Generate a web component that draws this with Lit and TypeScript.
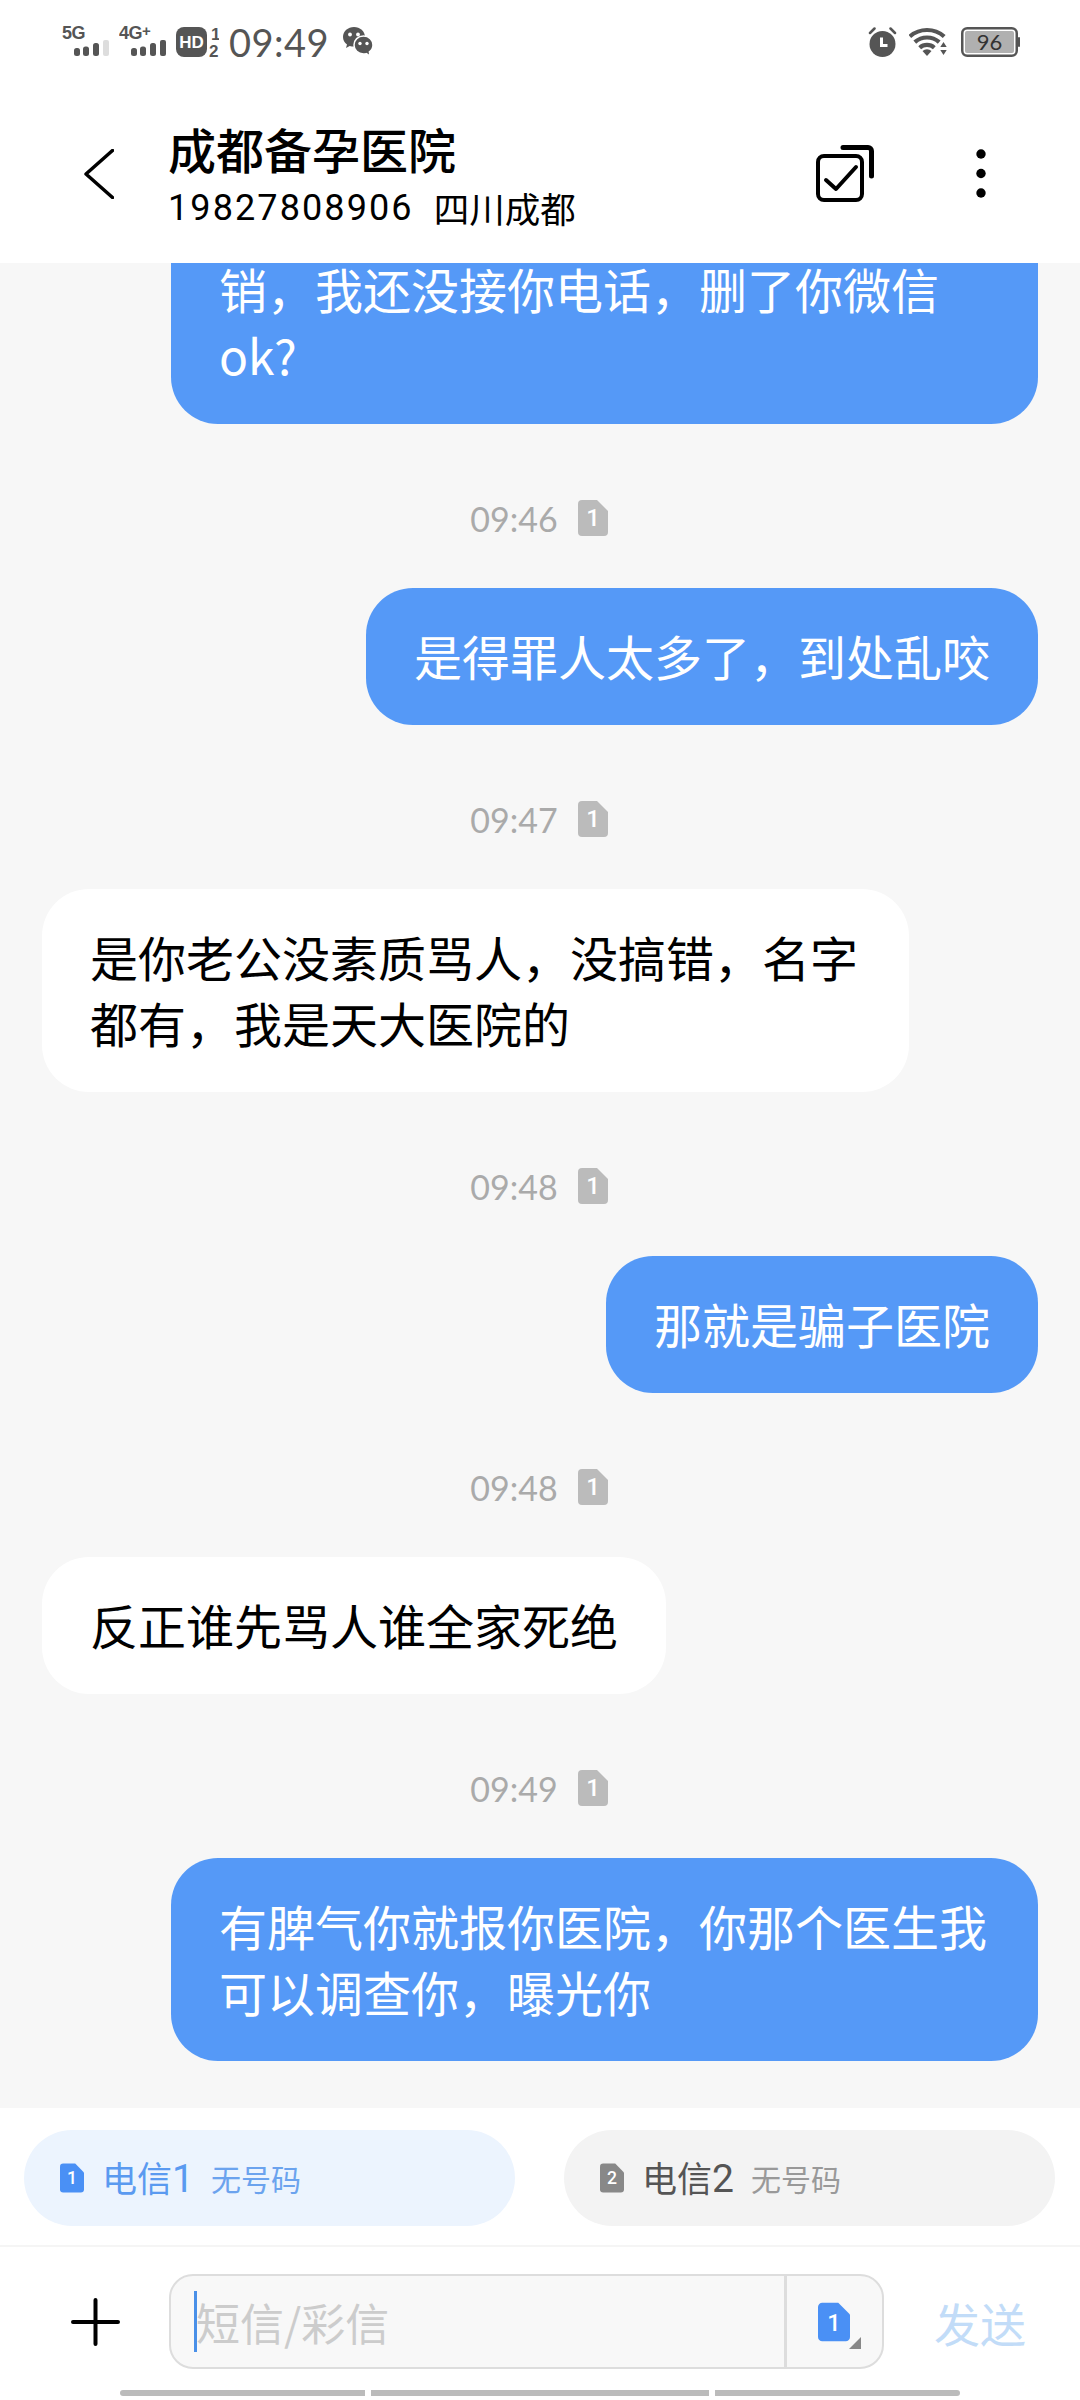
import { LitElement, html, css, svg } from 'lit';
import { customElement } from 'lit/decorators.js';

type Msg = { time?: string; text: string[]; mine: boolean; clipped?: boolean };

const MESSAGES: Msg[] = [
  { text: ['销，我还没接你电话，删了你微信', 'ok?'], mine: true, clipped: true },
  { time: '09:46', text: ['是得罪人太多了，到处乱咬'], mine: true },
  { time: '09:47', text: ['是你老公没素质骂人，没搞错，名字', '都有，我是天大医院的'], mine: false },
  { time: '09:48', text: ['那就是骗子医院'], mine: true },
  { time: '09:48', text: ['反正谁先骂人谁全家死绝'], mine: false },
  { time: '09:49', text: ['有脾气你就报你医院，你那个医生我', '可以调查你，曝光你'], mine: true },
];

const signal = (label: string, plus: boolean, lastColor: string) => html`
  <svg class="signal" width="47" height="44" viewBox="0 -6 47 44">
    <text x="0" y="13" font-family="Liberation Sans, sans-serif" font-weight="700" font-size="18" letter-spacing="-0.5" fill="#555">${label}${plus ? svg`<tspan font-size="15" dy="-3">+</tspan>` : ''}</text>
    <rect x="12" y="22" width="6" height="8" rx="2.500" fill="#555" />
    <rect x="21" y="20.500" width="6" height="9.500" rx="2.500" fill="#555" />
    <rect x="31" y="17" width="6" height="13" rx="2.500" fill="#555" />
    <rect x="41" y="14" width="6" height="16" rx="2" fill="${lastColor}" />
  </svg>
`;

const sim = (n: string, fill: string, w: number, h: number, size: number) => html`
  <svg width="${w}" height="${h}" viewBox="0 0 30 36">
    <path d="M4 0H19L30 11V32a4 4 0 0 1-4 4H4a4 4 0 0 1-4-4V4a4 4 0 0 1 4-4Z" fill="${fill}" />
    <text x="15" y="26" text-anchor="middle" font-family="Roboto, sans-serif" font-weight="500" font-size="${size}" fill="#fff">${n}</text>
  </svg>
`;

const dots = svg`
  <circle cx="5" cy="5" r="4.700" fill="#000" />
  <circle cx="5" cy="24.500" r="4.700" fill="#000" />
  <circle cx="5" cy="44" r="4.700" fill="#000" />
`;

@customElement('app-root')
export class AppRoot extends LitElement {
  static styles = css`
    :host {
      display: flex;
      flex-direction: column;
      width: 1080px;
      height: 2400px;
      background: #fff;
      font-family: 'Noto Sans CJK SC', 'Noto Sans', sans-serif;
      overflow: hidden;
    }

    .status {
      height: 84px;
      display: flex;
      align-items: center;
      padding: 0 60px 0 62px;
      color: #555;
      flex: none;
      box-sizing: border-box;
    }
    .signal {
      margin-right: 10px;
    }
    .clock {
      font-family: Lato, sans-serif;
      font-size: 38px;
      line-height: 44px;
      letter-spacing: 0.5px;
      margin-left: 10px;
    }
    .wechat {
      margin-left: 14px;
    }
    .spacer {
      flex: 1;
    }
    .alarm {
      margin-right: 12px;
    }
    .wifi {
      margin-right: 12px;
    }

    .nav {
      height: 179px;
      display: flex;
      align-items: center;
      flex: none;
      box-sizing: border-box;
      padding: 0 94px 0 84px;
    }
    .titles {
      margin-left: 54px;
      margin-top: 7px;
      color: #000;
      flex: 1;
    }
    .title {
      font-size: 48px;
      line-height: 56px;
      font-weight: 500;
    }
    .sub {
      font-size: 35.500px;
      line-height: 54px;
      margin-top: 5px;
      display: flex;
    }
    .phone {
      font-family: Roboto, sans-serif;
      font-size: 36px;
      letter-spacing: 2.100px;
      margin-right: 20px;
    }
    .copy {
      margin-right: 102px;
    }

    .chat {
      height: 1845px;
      background: #f7f7f7;
      overflow: hidden;
      display: flex;
      flex-direction: column;
      justify-content: flex-end;
      padding: 0 42px 47px;
      box-sizing: border-box;
      flex: none;
    }
    .time {
      height: 50px;
      margin: 69px 0 45px;
      padding-right: 2px;
      display: flex;
      align-items: center;
      justify-content: center;
      gap: 20px;
      flex: none;
    }
    .time span {
      font-family: Lato, sans-serif;
      font-size: 34px;
      color: #aaa;
    }
    .bubble {
      padding: 34px 48px 37px;
      border-radius: 47px;
      font-size: 48px;
      line-height: 66px;
      white-space: nowrap;
      flex: none;
      box-sizing: border-box;
    }
    .bubble.multi {
      width: 867px;
    }
    .bubble.mine {
      align-self: flex-end;
      background: #5599f7;
      color: #fff;
    }
    .bubble.theirs {
      align-self: flex-start;
      background: #fff;
      color: #000;
    }
    .bubble.clipped {
      padding-top: 80px;
      border-radius: 0 0 47px 47px;
    }

    .chips {
      height: 139px;
      display: flex;
      justify-content: space-between;
      padding: 22px 25px 0 24px;
      box-sizing: border-box;
      border-bottom: 2px solid #f5f5f5;
      flex: none;
    }
    .chip {
      width: 491px;
      height: 96px;
      border-radius: 48px;
      display: flex;
      align-items: center;
      padding-left: 36px;
      box-sizing: border-box;
    }
    .chip.on {
      background: #ecf4fe;
      color: #5a9af0;
    }
    .chip.off {
      background: #f3f3f3;
      color: #555;
    }
    .chip b {
      font-weight: 400;
      font-size: 35px;
      margin-left: 18px;
      line-height: 40px;
    }
    .chip b i {
      font-family: Roboto, sans-serif;
      font-style: normal;
      font-size: 39px;
    }
    .chip small {
      font-size: 30px;
      margin-left: 17px;
      line-height: 40px;
    }
    .chip.on small {
      color: #6ba3ee;
    }
    .chip.off small {
      color: #999;
    }

    .compose {
      height: 140px;
      display: flex;
      align-items: center;
      padding: 9px 0 0 71px;
      box-sizing: border-box;
      flex: none;
    }
    .plus {
      margin-right: 49px;
    }
    .field {
      width: 715px;
      height: 95px;
      display: flex;
      border: 2px solid #ddd;
      border-radius: 24px;
      background: #f8f8f8;
      box-sizing: border-box;
    }
    .input {
      flex: 1;
      display: flex;
      align-items: center;
      padding-left: 23px;
      border-right: 3px solid #ddd;
      font-size: 44px;
      color: #ccc;
    }
    .caret {
      width: 3px;
      height: 61px;
      background: #4a90e8;
      margin-right: -1px;
      flex: none;
    }
    .simpick {
      width: 95px;
      position: relative;
      display: flex;
      align-items: center;
      padding-left: 31px;
      box-sizing: border-box;
    }
    .arrow {
      position: absolute;
      left: 62px;
      top: 61px;
    }
    .send {
      margin-left: 50px;
      font-size: 46px;
      color: #c2dcf8;
    }

    .home {
      display: flex;
      gap: 6px;
      padding: 0 120px;
      margin-top: 3px;
      flex: none;
    }
    .home div {
      height: 6px;
      background: #bbb;
    }
    .home .a {
      width: 245px;
      border-radius: 3px 0 0 3px;
    }
    .home .b {
      flex: 1;
    }
    .home .c {
      width: 245px;
      border-radius: 0 3px 3px 0;
    }
  `;

  renderStatus() {
    return html`
      <div class="status">
        ${signal('5G', false, '#ddd')}
        ${signal('4G', true, '#555')}
        <svg width="43" height="44" viewBox="0 -6 43 44">
          <rect x="0" y="1" width="31" height="30" rx="8" fill="#555" />
          <text x="15.500" y="22" text-anchor="middle" font-family="Liberation Sans, sans-serif" font-weight="700" font-size="17" fill="#fff">HD</text>
          <text x="35" y="14" font-family="Liberation Sans, sans-serif" font-weight="700" font-size="17" fill="#555">1</text>
          <text x="33" y="31" font-family="Liberation Sans, sans-serif" font-weight="700" font-size="17" fill="#555">2</text>
        </svg>
        <span class="clock">09:49</span>
        <svg class="wechat" width="30" height="30" viewBox="0 0 30 30">
          <path d="M11 0C5 0 0 4.200 0 10c0 3 1.500 5.700 4 7.500L3 21l3.700-2c1.400.4 2.800.6 4.300.6 5.500 0 11-4 11-9.600C22 4.200 17 0 11 0Z" fill="#555" />
          <circle cx="7" cy="7.500" r="1.900" fill="#fff" />
          <circle cx="15" cy="7.500" r="1.900" fill="#fff" />
          <path d="M20.500 9C15 9 11 13 11 18s4 9 9.500 9c1 0 2-.1 2.900-.4L27 29l-.6-4.200c2.200-1.500 3.600-4 3.600-6.800 0-5-4-9-9.500-9Z" fill="#555" stroke="#fff" stroke-width="1.500" />
          <circle cx="17" cy="16.500" r="1.700" fill="#fff" />
          <circle cx="24" cy="16.500" r="1.700" fill="#fff" />
        </svg>
        <div class="spacer"></div>
        <svg class="alarm" width="29" height="30" viewBox="0 0 28 30">
          <circle cx="14" cy="17" r="13" fill="#555" />
          <path d="M1.500 6 6 1.500M26.500 6 22 1.500" stroke="#555" stroke-width="2.500" stroke-linecap="round" />
          <path d="M13 10.500V18.500H19" stroke="#fff" stroke-width="3" fill="none" />
        </svg>
        <svg class="wifi" width="40" height="30" viewBox="0 0 40 30">
          <g fill="none" stroke="#555" stroke-width="4.200">
            <path d="M.8 9.500A26 26 0 0 1 35.200 9.500" />
            <path d="M5.800 15.100A18.500 18.500 0 0 1 30.200 15.100" />
            <path d="M10.700 20.700A11 11 0 0 1 25.300 20.700" />
          </g>
          <path d="M18 29 13.500 24A6.700 6.700 0 0 1 22.500 24Z" fill="#555" />
          <path d="M34.500 15l3.200 5h-6.400ZM34.500 28l3.200-5h-6.400Z" fill="#555" />
        </svg>
        <svg width="59" height="30" viewBox="0 0 59 30">
          <rect x="1.250" y="1.250" width="54.500" height="27.500" rx="5" fill="none" stroke="#555" stroke-width="2.500" />
          <rect x="4" y="4" width="49" height="22" rx="2" fill="#b0b0b0" />
          <rect x="57" y="10" width="2" height="10" rx="1" fill="#555" />
          <text x="28.500" y="22.500" text-anchor="middle" font-family="Lato, sans-serif" font-size="22" fill="#333">96</text>
        </svg>
      </div>
    `;
  }

  renderNav() {
    return html`
      <div class="nav">
        <svg width="30" height="50" viewBox="0 0 30 50">
          <path d="M28.500 1.500 2 25l26.500 23.500" fill="none" stroke="#000" stroke-width="3.500" stroke-linecap="round" stroke-linejoin="round" />
        </svg>
        <div class="titles">
          <div class="title">成都备孕医院</div>
          <div class="sub"><span class="phone">19827808906</span><span>四川成都</span></div>
        </div>
        <svg class="copy" width="58" height="58" viewBox="0 0 58 58">
          <path d="M27 2.500H52a3.500 3.500 0 0 1 3.500 3.500V31" fill="none" stroke="#000" stroke-width="5" stroke-linecap="round" />
          <rect x="2" y="11" width="44" height="44" rx="6" fill="none" stroke="#000" stroke-width="4" />
          <path d="M10 35l10 9 20-22" fill="none" stroke="#000" stroke-width="4" stroke-linecap="round" stroke-linejoin="round" />
        </svg>
        <svg width="10" height="49" viewBox="0 0 10 49">${dots}</svg>
      </div>
    `;
  }

  renderMessage(m: Msg) {
    const classes = [m.mine ? 'mine' : 'theirs', m.text.length > 1 ? 'multi' : '', m.clipped ? 'clipped' : ''].join(' ');
    return html`
      ${m.time
        ? html`<div class="time"><span>${m.time}</span>${sim('1', '#bbb', 30, 36, 24)}</div>`
        : ''}
      <div class="bubble ${classes}">
        ${m.text.map((line) => html`<div>${line}</div>`)}
      </div>
    `;
  }

  render() {
    return html`
      ${this.renderStatus()}
      ${this.renderNav()}
      <div class="chat">${MESSAGES.map((m) => this.renderMessage(m))}</div>
      <div class="chips">
        <div class="chip on">
          ${sim('1', '#4a90f5', 24, 30, 22)}
          <b>电信<i>1</i></b><small>无号码</small>
        </div>
        <div class="chip off">
          ${sim('2', '#888', 24, 30, 22)}
          <b>电信<i>2</i></b><small>无号码</small>
        </div>
      </div>
      <div class="compose">
        <svg class="plus" width="49" height="50" viewBox="0 0 49 50">
          <path d="M2 25H47M24.500 3V47" stroke="#000" stroke-width="4" stroke-linecap="round" />
        </svg>
        <div class="field">
          <div class="input"><div class="caret"></div>短信/彩信</div>
          <div class="simpick">
            ${sim('1', '#4a90f5', 32, 40, 22)}
            <svg class="arrow" width="12" height="12" viewBox="0 0 12 12"><path d="M12 0V12H0Z" fill="#888" /></svg>
          </div>
        </div>
        <div class="send">发送</div>
      </div>
      <div class="home"><div class="a"></div><div class="b"></div><div class="c"></div></div>
    `;
  }
}
